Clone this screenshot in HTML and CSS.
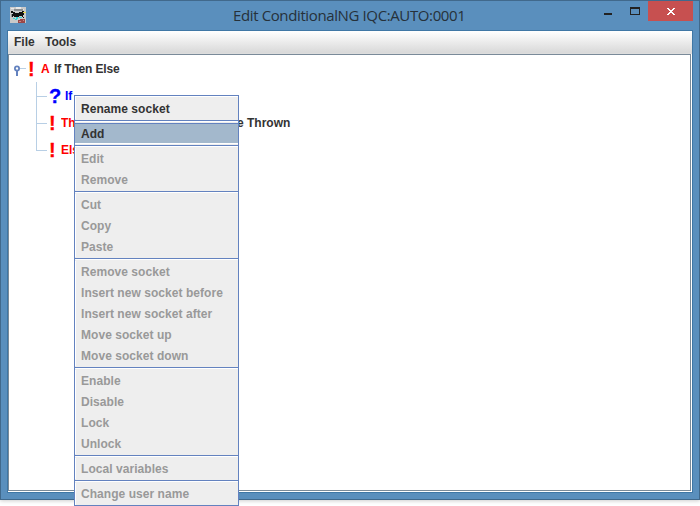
FILE: index.html
```html
<!DOCTYPE html>
<html lang="en">
<head>
<meta charset="utf-8">
<title>Edit ConditionalNG IQC:AUTO:0001</title>
<link rel="stylesheet" href="styles.css">
</head>
<body>
<div class="window">
  <header class="titlebar">
    <svg class="app-icon" width="16" height="16" viewBox="0 0 16 16" shape-rendering="crispEdges">
      <path fill="#c9c9c9" d="M0 0h16v16H0z"/>
      <path fill="#e8e8e8" d="M1 1h3v1H1zM6 0h5v2H6zM12 2h2v1h-2z"/>
      <path fill="#8b8f92" d="M4 2h9v2H4zM1 7h2v3H1z"/>
      <path fill="#111" d="M1 4h2v1h2v1h4V5h3V4h2v4h-1v2h1v1h-1v-1h-1V9H9v1H4V9H3v1H2V7h1V6H1z"/>
      <path fill="#e5d84a" d="M13 5h3v1h-3z"/>
      <path fill="#35d6d6" d="M3 11h2v1H3zM6 10h2v2H6zM9 10h3v1H9zM5 12h2v1H5z"/>
      <path fill="#9b4747" d="M10 12h5v1h-5zM8 13h7v3H8z"/>
      <path fill="#c98787" d="M9 14h2v1H9zM13 13h1v1h-1z"/>
    </svg>
    <h1 class="title">Edit ConditionalNG IQC:AUTO:0001</h1>
    <div class="controls">
      <span class="min"></span>
      <span class="max"></span>
      <span class="close"><svg width="8" height="7" viewBox="0 0 8 7" shape-rendering="crispEdges"><path fill="#fff" d="M0 0h2v1h1v1h2V1h1V0h2v1H7v1H6v1H5v1h1v1h1v1h1v1H6V6H5V5H3v1H2v1H0V6h1V5h1V4h1V3H2V2H1V1H0z"/></svg></span>
    </div>
  </header>
  <div class="frame">
    <nav class="menubar"><span class="m-file">File</span><span class="m-tools">Tools</span></nav>
    <main class="tree">
      <div class="row root">
        <svg class="handle" width="13" height="12" viewBox="0 0 13 12"><path d="M6 3.5h6" stroke="#b8cfe5"/><circle cx="3" cy="3.5" r="2.1" fill="#fff" stroke="#6382bf" stroke-width="1.8"/><path d="M3 6v5" stroke="#6382bf" stroke-width="2"/></svg>
        <span class="mark">!</span><span class="name-a">A</span><span class="label">If Then Else</span>
      </div>
      <div class="children">
        <div class="row child q"><span class="mark">?</span><span class="name">If</span></div>
        <div class="row child"><span class="mark">!</span><span class="name">Then</span><span class="label thrown">e Thrown</span></div>
        <div class="row child"><span class="mark">!</span><span class="name">Else</span></div>
      </div>
    </main>
  </div>
</div>
<div class="popup">
  <div class="item on">Rename socket</div>
  <hr>
  <div class="item on selected">Add</div>
  <hr>
  <div class="item">Edit</div>
  <div class="item">Remove</div>
  <hr>
  <div class="item">Cut</div>
  <div class="item">Copy</div>
  <div class="item">Paste</div>
  <hr>
  <div class="item">Remove socket</div>
  <div class="item">Insert new socket before</div>
  <div class="item">Insert new socket after</div>
  <div class="item">Move socket up</div>
  <div class="item">Move socket down</div>
  <hr>
  <div class="item">Enable</div>
  <div class="item">Disable</div>
  <div class="item">Lock</div>
  <div class="item">Unlock</div>
  <hr>
  <div class="item">Local variables</div>
  <hr>
  <div class="item">Change user name</div>
</div>
</body>
</html>
```
FILE: styles.css
```css
* { box-sizing: border-box; }
body {
  margin: 0;
  height: 506px;
  overflow: hidden;
  background: #fff;
  color: #333;
  font: bold 12px/23px "Liberation Sans", Arial, sans-serif;
}
.window {
  width: 700px;
  height: 500px;
  padding: 0 6px 6px;
  background: #5a8fbd;
  border: 1px solid #41698c;
  box-shadow: 0 1px 4px rgba(0, 0, 0, .2);
  display: flex;
  flex-direction: column;
}
.titlebar {
  height: 29px;
  display: flex;
}
.app-icon { margin: 6px 0 0 3px; }
.title {
  margin: 0 0 0 207px;
  width: 232px;
  font: 15px/28px "Open Sans", "Noto Sans", sans-serif;
  letter-spacing: -.38px;
  color: #26313a;
  white-space: nowrap;
}
.controls { display: flex; margin-left: auto; }
.min { width: 8px; height: 2px; margin: 12px 18px 0 0; background: #222; }
.max { width: 10px; height: 8px; margin: 6px 8px 0 0; border: 1px solid #222; border-top-width: 2px; }
.close {
  width: 45px;
  height: 20px;
  background: #c75050;
  display: flex;
  align-items: center;
  justify-content: center;
}
.frame {
  flex: 1;
  border: 1px solid #3f77a5;
  background: #fff;
  display: flex;
  flex-direction: column;
}
.menubar {
  height: 23px;
  padding-left: 6px;
  display: flex;
  background: linear-gradient(#fff, #dadada 21px);
  border-bottom: 1px solid #ddd;
}
.m-file { width: 31px; }
.tree {
  flex: 1;
  margin: 0 1px 1px 0;
  border: 1px solid #7a8a99;
  padding: 1px 0 0 5px;
}
.row { display: flex; align-items: center; height: 27px; white-space: nowrap; }
.handle { margin: 2px 0 0; }
.mark {
  font-size: 20px;
  width: 14px;
  color: #f00;
  -webkit-text-stroke: .3px;
}
.root .mark { width: 13px; margin-left: 1px; }
.root .name-a { width: 13px; color: #f00; }
.root .label { letter-spacing: -.15px; }
.children { margin-left: 22px; }
.child { position: relative; padding-left: 13px; color: #f00; }
.child::before {
  content: "";
  position: absolute;
  left: 0;
  top: -1px;
  width: 10px;
  height: 14px;
  border-left: 1px solid #b8cfe5;
  border-bottom: 1px solid #b8cfe5;
}
.child:not(:last-child)::after {
  content: "";
  position: absolute;
  left: 0;
  top: 13px;
  height: 14px;
  border-left: 1px solid #b8cfe5;
}
.child .mark { margin-right: -2px; }
.child .name { width: 14px; overflow: hidden; }
.q, .q .mark { color: #00f; }
.q .mark { width: 18px; }
.label { color: #333; }
.thrown { margin-left: 162px; }
.popup {
  position: absolute;
  left: 74px;
  top: 95px;
  width: 165px;
  height: 411px;
  padding: 2px 0 1px;
  border: 1px solid #6382bf;
  background: #eee;
  box-shadow: inset 1px 1px #fff;
}
.item {
  height: 21px;
  padding-left: 6px;
  color: #999;
  letter-spacing: .05px;
  white-space: nowrap;
}
.on { color: #333; }
.selected {
  background: #a3b8cc;
  border-top: 1px solid #6382bf;
  border-bottom: 1px solid #fff;
  line-height: 21px;
}
hr {
  height: 4px;
  margin: 0;
  border: 0;
  background: linear-gradient(#eee 1px, #6382bf 1px 2px, #fff 2px 3px, #eee 3px);
}
```
